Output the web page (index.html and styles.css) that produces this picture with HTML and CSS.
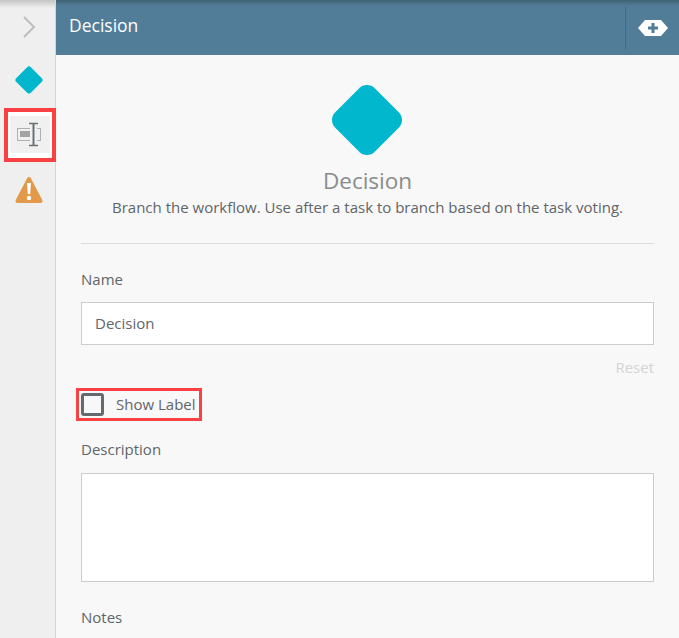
FILE: index.html
```html
<!DOCTYPE html>
<html lang="en">
<head>
    <meta charset="UTF-8">
    <meta name="viewport" content="width=device-width, initial-scale=1.0">
    <title>Decision</title>
    <link rel="stylesheet" href="styles.css">
</head>
<body>
    <div class="app">
        <div class="sidebar">
            <div class="side-chevron">
                <svg width="14" height="24" viewBox="0 0 14 24"><path d="M2 2l10 10L2 22" fill="none" stroke="#bdbdbd" stroke-width="2"/></svg>
            </div>
            <div class="side-diamond">
                <svg width="30" height="30" viewBox="0 0 30 30"><path d="M15 4.500L25.500 15 15 25.500 4.500 15z" fill="#00b7cd" stroke="#00b7cd" stroke-width="6" stroke-linejoin="round"/></svg>
            </div>
            <div class="side-active">
                <div class="side-active-inner">
                    <svg width="26" height="30" viewBox="0 0 26 30">
                        <rect x="0.500" y="8.500" width="23" height="12" fill="none" stroke="#b0b0b0"/>
                        <rect x="3" y="11" width="10" height="6" fill="#a3a3a3"/>
                        <rect x="13" y="5" width="7" height="20" fill="#f0f0f0"/>
                        <path d="M12 3.500h9M12 25.500h9" fill="none" stroke="#687074" stroke-width="1.500"/>
                        <path d="M16.500 3.500v22" fill="none" stroke="#687074" stroke-width="2"/>
                    </svg>
                </div>
            </div>
            <div class="side-warning">
                <svg width="30" height="30" viewBox="0 0 30 30">
                    <path d="M15 4L26.500 26H3.500z" fill="#e2994a" stroke="#e2994a" stroke-width="4" stroke-linejoin="round"/>
                    <path d="M13 8h4l-.8 11h-2.400z" fill="#fff"/>
                    <circle cx="15" cy="23" r="2.200" fill="#fff"/>
                </svg>
            </div>
        </div>

        <div class="main">
            <div class="header">
                <div class="header-title">Decision</div>
                <div class="header-action">
                    <svg width="30" height="16" viewBox="0 0 30 16">
                        <path d="M7 0h16l7 8-7 8H7L0 8z" fill="#fff"/>
                        <path d="M15 3v10M10 8h10" stroke="#527d98" stroke-width="3"/>
                    </svg>
                </div>
            </div>

            <div class="content">
                <div class="intro">
                    <svg class="intro-icon" width="72" height="72" viewBox="0 0 72 72"><path d="M36 12L60 36 36 60 12 36z" fill="#00b7cd" stroke="#00b7cd" stroke-width="22" stroke-linejoin="round"/></svg>
                    <div class="intro-title">Decision</div>
                    <div class="intro-text">Branch the workflow. Use after a task to branch based on the task voting.</div>
                </div>

                <label class="field-label name-label">Name</label>
                <input class="text-input" type="text" value="Decision">
                <div class="reset">Reset</div>

                <div class="show-label">
                    <span class="checkbox"></span>
                    <span class="show-label-text">Show Label</span>
                </div>

                <label class="field-label description-label">Description</label>
                <textarea class="text-area"></textarea>

                <label class="field-label notes-label">Notes</label>
            </div>
        </div>
    </div>
</body>
</html>
```

FILE: styles.css
```css
html, body {
    margin: 0;
    padding: 0;
    height: 100%;
    overflow: hidden;
}

body {
    font-family: "Open Sans", sans-serif;
    color: #5f6568;
    background-color: #f8f8f8;
}

.app {
    display: flex;
    height: 638px;
}

/* Left icon rail */
.sidebar {
    width: 55px;
    flex-shrink: 0;
    display: flex;
    flex-direction: column;
    align-items: center;
    background: linear-gradient(#c4c4c4 0, #efefef 8px);
    background-color: #efefef;
    border-right: 1px solid #d6d6d6;
}

.side-chevron {
    height: 54px;
    display: flex;
    align-items: center;
    justify-content: center;
    padding-left: 3px;
}

.side-diamond {
    height: 54px;
    width: 100%;
    display: flex;
    align-items: center;
    justify-content: center;
    box-sizing: border-box;
    padding: 0 0 2px 3px;
}

.side-active {
    box-sizing: border-box;
    align-self: flex-start;
    margin-left: 4px;
    width: 52px;
    height: 54px;
    border: 4px solid #f94144;
    background-color: #fff;
    padding: 4px 2px;
}

.side-active-inner {
    height: 37px;
    width: 40px;
    display: flex;
    align-items: center;
    justify-content: center;
    background-color: #f0f0f0;
}

.side-warning {
    height: 57px;
    box-sizing: border-box;
    display: flex;
    align-items: center;
    justify-content: center;
    padding: 0 0 2px 3px;
}

/* Main panel */
.main {
    flex: 1;
    display: flex;
    flex-direction: column;
    min-width: 0;
}

.header {
    height: 55px;
    flex-shrink: 0;
    display: flex;
    align-items: center;
    justify-content: space-between;
    background: linear-gradient(#3e6274 0, #527d98 6px);
    color: #fff;
}

.header-title {
    font-size: 17.500px;
    padding-left: 13px;
    padding-bottom: 5px;
}

.header-action {
    width: 53px;
    height: 42px;
    margin-top: 1px;
    display: flex;
    align-items: center;
    justify-content: center;
    border-left: 1px solid #3f6a85;
}

.content {
    flex: 1;
    padding: 0 25px;
    display: flex;
    flex-direction: column;
    align-items: stretch;
}

.intro {
    display: flex;
    flex-direction: column;
    align-items: center;
    height: 188px;
    border-bottom: 1px solid #dcdcdc;
}

.intro-icon {
    margin-top: 29px;
    margin-left: -2px;
}

.intro-title {
    font-size: 22.500px;
    line-height: 32px;
    color: #888c8c;
    margin-top: 9px;
}

.intro-text {
    font-size: 15px;
    line-height: 20px;
    color: #5f6568;
}

.field-label {
    display: block;
    font-size: 15px;
    line-height: 20px;
    color: #5f6568;
}

.name-label {
    margin-top: 25px;
}

.text-input {
    box-sizing: border-box;
    width: 100%;
    height: 43px;
    margin-top: 13px;
    padding: 0 13px 2px;
    font-family: inherit;
    font-size: 15px;
    color: #5f6568;
    background-color: #fff;
    border: 1px solid #cccccc;
    outline: none;
}

.reset {
    text-align: right;
    font-size: 15px;
    line-height: 20px;
    color: #d4d4d4;
    margin-top: 12px;
}

.show-label {
    box-sizing: border-box;
    align-self: flex-start;
    margin-left: -5px;
    margin-top: 11px;
    width: 126px;
    height: 33px;
    display: flex;
    align-items: center;
    border: 3px solid #f94144;
    background-color: #f8f8f8;
}

.checkbox {
    box-sizing: border-box;
    width: 23px;
    height: 23px;
    margin-left: 2px;
    border: 3px solid #646b70;
    border-radius: 3px;
    background-color: #f8f8f8;
}

.show-label-text {
    font-size: 15px;
    color: #5f6568;
    margin-left: 12px;
    padding-bottom: 2px;
    white-space: nowrap;
}

.description-label {
    margin-top: 18px;
}

.text-area {
    display: block;
    box-sizing: border-box;
    width: 100%;
    height: 109px;
    margin-top: 14px;
    background-color: #fff;
    border: 1px solid #cccccc;
    outline: none;
    resize: none;
}

.notes-label {
    margin-top: 25px;
}
```
